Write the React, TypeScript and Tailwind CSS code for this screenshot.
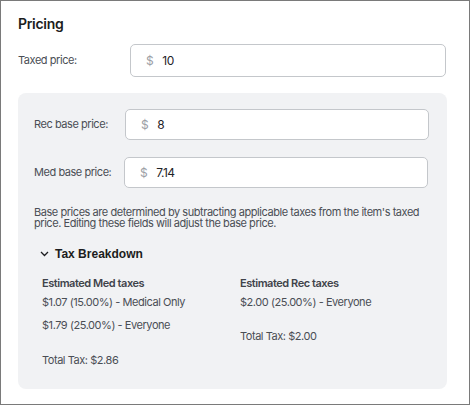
import React from "react";

function PriceInput({ value, className }: { value: string; className: string }) {
  return (
    <div className={`flex items-center rounded-[5px] border border-[#c4c7cb] bg-white ${className}`}>
      <span className="ml-[15px] text-[12px] text-[#9ca0a6]">$</span>
      <span className="ml-[9px] text-[12px] tracking-[-0.5px] text-[#1f2328]">{value}</span>
    </div>
  );
}

export default function App() {
  return (
    <div
      className="w-[470px] h-[405px] border border-[#7a7a7a] bg-white text-[#4a4e55] tracking-[-0.45px]"
      style={{ fontFamily: "Inter, 'Noto Sans', sans-serif" }}
    >
      <div className="px-[17px] pt-[13px]">
        <h2 className="text-[14px] font-semibold text-[#1c1d20] leading-[20px] tracking-[-0.3px]">Pricing</h2>
        <div className="mt-[10px] flex items-center">
          <span className="w-[112px] text-[11px]">Taxed price:</span>
          <PriceInput value="10" className="w-[316px] h-[33px]" />
        </div>
        <div className="mt-[16px] w-[429px] rounded-[8px] bg-[#f1f2f4] pl-[16px] pr-[17px] pt-[16px] pb-[22px]">
          <div className="flex items-center">
            <span className="w-[91px] text-[11px]">Rec base price:</span>
            <PriceInput value="8" className="w-[304px] h-[31px]" />
          </div>
          <div className="mt-[17px] flex items-center">
            <span className="w-[90px] text-[11px]">Med base price:</span>
            <PriceInput value="7.14" className="w-[304px] h-[31px]" />
          </div>
          <p className="mt-[19px] text-[11px] leading-[11px]">
            Base prices are determined by subtracting applicable taxes from the item's taxed price. Editing these fields will adjust the base price.
          </p>
          <div
            className="mt-[16px] ml-[6px] flex items-center gap-[6px] text-[12px] font-bold text-[#1c1d20] tracking-normal"
            style={{ fontFamily: "'Liberation Sans', Arial, sans-serif" }}
          >
            <svg width="9" height="6" viewBox="0 0 9 6" fill="none">
              <path d="M1 1L4.5 4.5L8 1" stroke="#1c1d20" strokeWidth="1.3" />
            </svg>
            <span>Tax Breakdown</span>
          </div>
          <div className="mt-[13px] ml-[8px] grid grid-cols-2 text-[11px]">
            <div className="flex flex-col">
              <span className="font-semibold text-[#3f434a] leading-[14px]">Estimated Med taxes</span>
              <span className="mt-[5px] leading-[14px]">$1.07 (15.00%) - Medical Only</span>
              <span className="mt-[9px] leading-[14px]">$1.79 (25.00%) - Everyone</span>
              <span className="mt-[21px] leading-[14px]">Total Tax: $2.86</span>
            </div>
            <div className="flex flex-col pl-[4px]">
              <span className="font-semibold text-[#3f434a] leading-[14px]">Estimated Rec taxes</span>
              <span className="mt-[5px] leading-[14px]">$2.00 (25.00%) - Everyone</span>
              <span className="mt-[20px] leading-[14px]">Total Tax: $2.00</span>
            </div>
          </div>
        </div>
      </div>
    </div>
  );
}
